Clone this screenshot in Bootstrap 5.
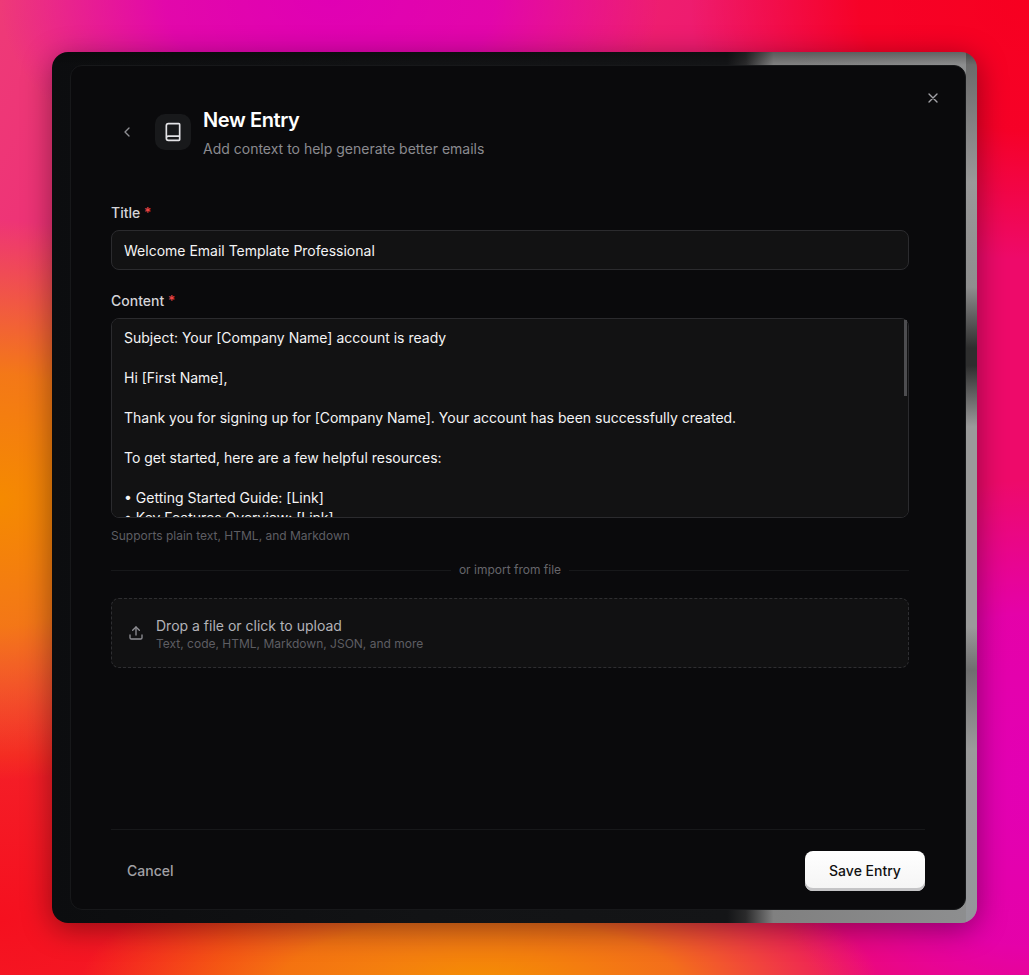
<!DOCTYPE html>
<html lang="en">
<head>
<meta charset="utf-8">
<title>New Entry</title>
<link rel="stylesheet" href="https://cdn.jsdelivr.net/npm/bootstrap@5.3.0/dist/css/bootstrap.min.css">
<style>
html,body{height:100%;margin:0}
body{font-family:Inter,"Liberation Sans",sans-serif;overflow:hidden;
background:
 radial-gradient(300px 280px at 0 500px,#f58a00 0,rgba(245,138,0,.8) 45%,rgba(245,138,0,0) 100%),
 radial-gradient(400px 130px at 480px 985px,#f59000 0,rgba(245,144,0,.75) 50%,rgba(245,144,0,0) 100%),
 radial-gradient(280px 300px at 1029px 780px,#e300b4 0,rgba(227,0,180,.85) 55%,rgba(227,0,180,0) 100%),
 radial-gradient(340px 260px at 1029px 0,#f70020 0,rgba(247,0,32,.9) 50%,rgba(247,0,32,0) 100%),
 radial-gradient(330px 200px at 330px 0,#e000b4 0,rgba(224,0,180,.85) 50%,rgba(224,0,180,0) 100%),
 radial-gradient(420px 300px at 0 920px,#f5101f 0,rgba(245,30,31,.9) 55%,rgba(245,30,31,0) 100%),
 linear-gradient(120deg,#ee3a78,#ee0a6a 70%);}
.stage{height:100vh;padding:52px}
.frame{height:871px;width:925px;border-radius:16px;padding:13px 11px 13px 18px;
 background:
  linear-gradient(180deg,rgba(0,0,0,.3),rgba(0,0,0,0)) left top/100% 13px no-repeat,
  linear-gradient(180deg,#666 0,#999 15%,#8e8e8e 27%,#2e2e2e 34%,#2e2e2e 36%,#9a9a9a 43%,#9a9a9a 66%,#6f6f6f 71%,#9a9a9a 80%,#94969a 100%) right top/11px 100% no-repeat,
  linear-gradient(90deg,#0c0d0f 0,#121315 40%,#141517 73%,#2a2a2b 75%,#808080 78%,#8e8f90 100%);
 box-shadow:0 6px 30px rgba(0,0,0,.4);}
.panel{height:100%;background:#0a0a0c;border:1px solid #17181a;border-radius:12px;padding:0 40px;color:#fff}
.close-x{top:22px;right:22px;width:20px;height:20px;color:#a3a3a8;background:none;border:0}
.head{padding-top:48px;height:137px}
.back{width:16px;height:36px;color:#8f8f94;margin-left:8px;margin-right:20px;background:none;border:0}
.tile{width:36px;height:36px;border-radius:10px;background:#18191b;color:#e4e4e7}
.head h1{font-size:20px;line-height:28px;font-weight:600;margin:-8px 0 0;letter-spacing:-.4px}
.head p{font-size:14px;line-height:20px;color:#8b8b90;margin:5px 0 0}
.fields{width:798px}
.lbl{font-size:14px;line-height:20px;font-weight:500;color:#d4d4d8;margin:0 0 7px;display:block}
.lbl span{color:#ef4444}
.inp{background:#121213;border:1px solid #2b2b2e;color:#f4f4f5;font-size:14px;line-height:20px;border-radius:8px;padding:9px 12px;height:40px;margin-bottom:21px}
textarea.inp{height:200px;resize:none;padding:9px 2px 0 12px;overflow-y:scroll;display:block;overflow-x:hidden;margin-bottom:0}
.inp:focus{background:#121213;color:#f4f4f5;border-color:#2b2b2e;box-shadow:none}
.thumb{top:2px;right:2px;width:3px;height:76px;background:#4d4d50}
.areawrap{margin-bottom:10px}
.help{font-size:12px;line-height:16px;color:#5e5e63}
.rule{height:1px;background:#17181a;flex:1}
.or{font-size:12px;line-height:16px;color:#66666b}
.orrow{margin:18px 0 20px;gap:8px}
.drop{height:70px;border:1px dashed #2e2e31;border-radius:8px;background:#111112;padding:0 16px;gap:12px}
.drop>div{padding-top:2px}
.drop b{display:block;font-weight:400;font-size:14px;line-height:20px;color:#b3b3b8}
.drop small{display:block;font-size:12px;line-height:16px;color:#5e5e63}
.foot{border-top:1px solid #17181a;height:80px;padding-top:21px}
.foot .cancel{color:#a1a1a6;font-size:14px;line-height:20px;padding:10px 16px;background:none;border:0;font-weight:500}
.foot .save{width:120px;height:40px;border-radius:8px;border:0;background:linear-gradient(#fff,#f4f4f4);color:#111;font-size:14px;font-weight:500;padding:0 0 2px;box-shadow:inset 0 -3px 0 #c4c4c6}
</style>
</head>
<body>
<div class="stage">
  <div class="frame">
    <div class="panel position-relative d-flex flex-column">
      <button class="close-x position-absolute d-flex align-items-center justify-content-center p-0" aria-label="Close">
        <svg width="16" height="16" viewBox="0 0 24 24" fill="none" stroke="currentColor" stroke-width="2" stroke-linecap="round"><path d="M18 6 6 18M6 6l12 12"/></svg>
      </button>
      <div class="head d-flex align-items-start">
        <button class="back p-0 d-flex align-items-center justify-content-center" aria-label="Back">
          <svg width="16" height="16" viewBox="0 0 24 24" fill="none" stroke="currentColor" stroke-width="2" stroke-linecap="round" stroke-linejoin="round"><path d="m15 18-6-6 6-6"/></svg>
        </button>
        <div class="tile d-flex align-items-center justify-content-center me-2 flex-shrink-0">
          <svg width="20" height="20" viewBox="0 0 24 24" fill="none" stroke="currentColor" stroke-width="2" stroke-linecap="round" stroke-linejoin="round"><path d="M4 19.5v-15A2.5 2.5 0 0 1 6.5 2H19a1 1 0 0 1 1 1v18a1 1 0 0 1-1 1H6.5a1 1 0 0 1 0-5H20"/></svg>
        </div>
        <div class="ms-1">
          <h1>New Entry</h1>
          <p>Add context to help generate better emails</p>
        </div>
      </div>
      <div class="fields">
        <label class="lbl" for="t">Title <span>*</span></label>
        <input id="t" class="form-control inp" value="Welcome Email Template Professional">
        <label class="lbl" for="c">Content <span>*</span></label>
        <div class="areawrap position-relative">
          <textarea id="c" class="form-control inp">Subject: Your [Company Name] account is ready

Hi [First Name],

Thank you for signing up for [Company Name]. Your account has been successfully created.

To get started, here are a few helpful resources:

• Getting Started Guide: [Link]
• Key Features Overview: [Link]
• Help Center: [Link]

If you have any questions, our support team is available at [Support Email].

We look forward to working with you.

Best regards,
[Your Name]
[Company Name]</textarea>
          <div class="thumb position-absolute"></div>
        </div>
        <div class="help">Supports plain text, HTML, and Markdown</div>
        <div class="orrow d-flex align-items-center"><div class="rule"></div><div class="or">or import from file</div><div class="rule"></div></div>
        <div class="drop d-flex align-items-center">
          <svg width="16" height="16" viewBox="0 0 24 24" fill="none" stroke="#8f8f94" stroke-width="2" stroke-linecap="round" stroke-linejoin="round" class="flex-shrink-0"><path d="M21 15v4a2 2 0 0 1-2 2H5a2 2 0 0 1-2-2v-4"/><path d="m17 8-5-5-5 5"/><path d="M12 3v12"/></svg>
          <div><b>Drop a file or click to upload</b><small>Text, code, HTML, Markdown, JSON, and more</small></div>
        </div>
      </div>
      <div class="foot mt-auto d-flex justify-content-between align-items-start">
        <button class="btn cancel">Cancel</button>
        <button class="btn save">Save Entry</button>
      </div>
    </div>
  </div>
</div>
<script src="https://cdn.jsdelivr.net/npm/bootstrap@5.3.0/dist/js/bootstrap.bundle.min.js"></script>
</body>
</html>
